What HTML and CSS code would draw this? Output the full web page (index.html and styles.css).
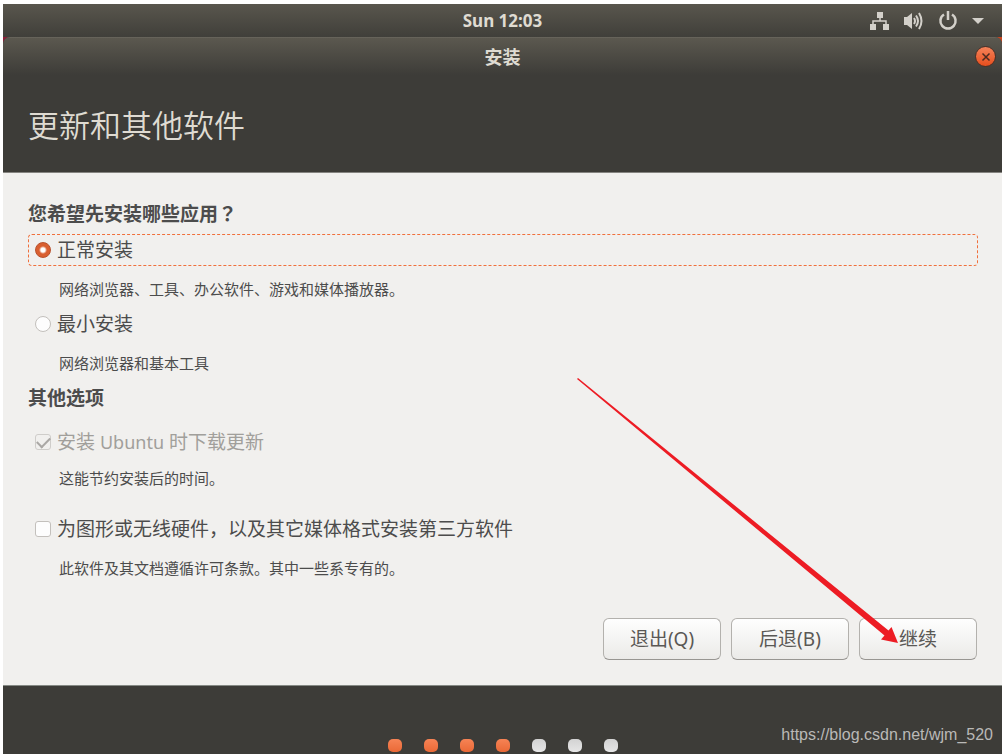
FILE: index.html
```html
<!DOCTYPE html>
<html lang="zh-CN">
<head>
<meta charset="utf-8">
<meta name="viewport" content="width=device-width, initial-scale=1">
<title>安装</title>
<link rel="stylesheet" href="styles.css">
</head>
<body>
<div class="desktop">
  <header class="panel">
    <time class="clock">Sun 12:03</time>
    <div class="tray">
      <svg class="tray-icon" width="20" height="20" viewBox="0 0 20 20" aria-label="网络"><path d="M7 1h6v6H7zM0 13h6v6H0zM13 13h6v6h-6z"/><path class="line" d="M10 7v3M3 13v-3h13v3"/></svg>
      <svg class="tray-icon" width="20" height="20" viewBox="0 0 20 20" aria-label="音量"><path d="M0 6h3l5-4v16l-5-4H0z"/><path class="wave" d="M10 7q2 3 0 6M12 4.500q4 5.500 0 11M15 2q5 8 0 16"/></svg>
      <svg class="tray-icon" width="20" height="20" viewBox="0 0 20 20" aria-label="电源"><path class="power" d="M6 3.500a7.600 7.600 0 1 0 8 0M10 0v9"/></svg>
      <svg class="tray-icon" width="12" height="20" viewBox="0 0 12 20" aria-hidden="true"><path d="M0 7h12l-6 6z"/></svg>
    </div>
  </header>
  <div class="backdrop">
    <main class="window">
      <div class="titlebar">
        <span class="window-title">安装</span>
        <button class="close" type="button" aria-label="关闭"><svg width="10" height="10" viewBox="0 0 10 10"><path d="M1.500 1.500l7 7M8.500 1.500l-7 7"/></svg></button>
      </div>
      <div class="banner"><h1 class="page-title">更新和其他软件</h1></div>
      <form class="content">
        <h2 class="heading">您希望先安装哪些应用<span class="mark" lang="zh-TW">？</span></h2>
        <label class="option focused"><input class="radio" type="radio" name="apps" checked><span>正常安装</span></label>
        <p class="note">网络浏览器、工具、办公软件、游戏和媒体播放器。</p>
        <label class="option"><input class="radio" type="radio" name="apps"><span>最小安装</span></label>
        <p class="note">网络浏览器和基本工具</p>
        <h2 class="heading">其他选项</h2>
        <label class="option disabled"><input class="check" type="checkbox" checked disabled><span>安装 <span class="latin">Ubuntu</span> 时下载更新</span></label>
        <p class="note">这能节约安装后的时间。</p>
        <label class="option third-party"><input class="check" type="checkbox"><span>为图形或无线硬件，以及其它媒体格式安装第三方软件</span></label>
        <p class="note">此软件及其文档遵循许可条款。其中一些系专有的。</p>
        <div class="actions">
          <button class="btn" type="button">退出(Q)</button>
          <button class="btn" type="button">后退(B)</button>
          <button class="btn" type="button">继续</button>
          <svg class="arrow" width="322" height="268" viewBox="0 0 322 268" aria-hidden="true"><path d="M1 1L311.500 253.500L314.500 250L321 266L304 262.500L307.500 258.500L0 2z"/></svg>
        </div>
      </form>
      <footer class="footer">
        <div class="dots"><i class="dot done"></i><i class="dot done"></i><i class="dot done"></i><i class="dot done"></i><i class="dot"></i><i class="dot"></i><i class="dot"></i></div>
        <a class="source" href="https://blog.csdn.net/wjm_520">https://blog.csdn.net/wjm_520</a>
      </footer>
    </main>
  </div>
</div>
</body>
</html>
```
FILE: styles.css
```css
* { box-sizing: border-box; }
body {
  margin: 0;
  background: #fff;
  color: #4c4c4c;
  font: 19px/28px "Noto Sans", "Noto Sans CJK SC", sans-serif;
}
.desktop {
  display: flex;
  flex-direction: column;
  min-height: 100vh;
  padding: 4px 0 0 3px;
}
.panel {
  position: relative;
  display: flex;
  justify-content: center;
  align-items: center;
  height: 33px;
  background: linear-gradient(#59564d, #403f3a);
}
.clock {
  color: #dfdbd2;
  font-size: 17px;
  font-weight: 700;
}
.tray {
  position: absolute;
  right: 18px;
  display: flex;
  align-items: center;
  gap: 14px;
}
.tray-icon { display: block; fill: #d3d0ca; }
.tray-icon .line, .tray-icon .wave, .tray-icon .power {
  fill: none;
  stroke: #d3d0ca;
  stroke-width: 1.5;
}
.tray-icon .wave { stroke-width: 2; }
.tray-icon .power { stroke-width: 2.5; }
.backdrop {
  display: flex;
  flex: 1;
  background: linear-gradient(90deg, #8c1d38, #c9451f);
}
.window {
  display: flex;
  flex: 1;
  flex-direction: column;
  overflow: hidden;
  border-radius: 7px 7px 0 0;
  background: #3d3c38;
}
.titlebar {
  position: relative;
  display: flex;
  justify-content: center;
  align-items: center;
  height: 38px;
  border-top: 1px solid #66635a;
  background: linear-gradient(#5b584f, #3d3c38);
}
.window-title {
  color: #dfdbd2;
  font-size: 18px;
  font-weight: 700;
}
.close {
  position: absolute;
  right: 6px;
  display: grid;
  place-items: center;
  width: 21px;
  height: 21px;
  padding: 0;
  border: 1px solid #4b3027;
  border-radius: 50%;
  background: linear-gradient(#f5835a, #e64e1d);
}
.close path { stroke: #4b2a20; stroke-width: 1.5; }
.banner {
  padding: 28px 25px 25px;
  border-bottom: 1px solid #858480;
}
.page-title {
  margin: 0;
  color: #dfdbd2;
  font-size: 31px;
  font-weight: 350;
  line-height: 44px;
}
.content {
  padding: 26px 24px 25px 25px;
  border-bottom: 1px solid #858984;
  background: #f1f0ee;
}
.heading {
  margin: 0;
  font-size: 19px;
  font-weight: 700;
  line-height: 28px;
}
.mark { font-family: "Noto Sans CJK TC", sans-serif; }
.latin { font-size: 18px; }
.option {
  display: flex;
  align-items: center;
  gap: 6px;
  height: 32px;
  margin-top: 6px;
  padding-left: 6px;
  border: 1px solid transparent;
  border-radius: 4px;
}
.focused { border: 1px dashed #f0703c; }
.disabled { margin-top: 14px; color: #a19f9b; }
.note {
  margin: 11px 0 0 31px;
  font-size: 15px;
  line-height: 24px;
}
.note + .option { margin-top: 7px; }
.note + .third-party { margin-top: 23px; }
.note + .heading { margin-top: 9px; }
.disabled + .note { margin-top: 8px; }
.radio, .check {
  appearance: none;
  flex: none;
  width: 16px;
  height: 16px;
  margin: 0;
  border: 1px solid #c3c0bc;
  background: #fdfdfd;
}
.radio { border-radius: 50%; }
.radio:checked {
  border-color: #b8502c;
  background: radial-gradient(circle, #fff 0 2px, #d95f30 4px);
}
.check { border-radius: 3px; }
.check:checked {
  display: grid;
  place-items: center;
  border-color: #cfcdca;
  background: #f1f0ee;
}
.check:checked::before {
  content: "";
  width: 11px;
  height: 6px;
  margin-bottom: 3px;
  border: solid #aaa8a5;
  border-width: 0 0 2px 2px;
  transform: rotate(-45deg);
}
.actions {
  position: relative;
  display: flex;
  justify-content: flex-end;
  gap: 10px;
  margin-top: 38px;
  padding-right: 1px;
}
.btn {
  width: 118px;
  height: 42px;
  padding: 0;
  border: 1px solid #b3b1ad;
  border-bottom-color: #989692;
  border-radius: 6px;
  background: linear-gradient(#fefefe, #ebeae8);
  color: #5a5855;
  font: inherit;
}
.arrow {
  position: absolute;
  right: 79px;
  bottom: 15px;
  fill: #ed1c24;
  pointer-events: none;
}
.footer {
  position: relative;
  display: flex;
  flex: 1;
  justify-content: center;
  align-items: flex-end;
  min-height: 68px;
  padding-bottom: 2px;
}
.dots { display: flex; gap: 22px; }
.dot {
  width: 14px;
  height: 13px;
  border-radius: 5px;
  background: linear-gradient(#d2d2d2, #e6e6e6);
}
.done { background: linear-gradient(#f68355, #ea6936); }
.source {
  position: absolute;
  right: 9px;
  bottom: 8px;
  color: #bab9b7;
  font: 16px/22px "Liberation Sans", Arial, sans-serif;
  text-decoration: none;
}
```
